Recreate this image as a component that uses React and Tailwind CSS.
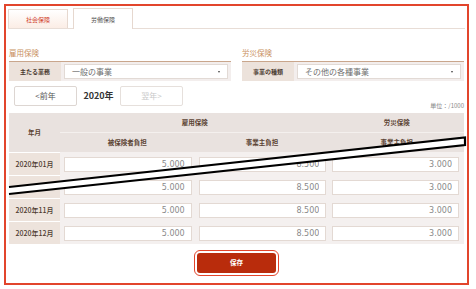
import React from 'react';

const rows = [
  { label: '2020年01月', a: '5.000', b: '8.500', c: '3.000' },
  { label: '', a: '5.000', b: '8.500', c: '3.000' },
  { label: '2020年11月', a: '5.000', b: '8.500', c: '3.000' },
  { label: '2020年12月', a: '5.000', b: '8.500', c: '3.000' },
];

function NumInput({ value }) {
  return (
    <input
      readOnly
      value={value}
      className="w-full h-[15px] bg-white border border-[#e3d9d3] text-right pr-[6px] text-[8px] text-[#8a8a8a] font-['DejaVu_Sans',sans-serif] outline-none"
    />
  );
}

function SelectRow({ label, value }) {
  return (
    <div className="flex h-[20px] border-t border-[#c9a68c] bg-[#f3eeed]">
      <div className="w-[52px] bg-[#ece2db] flex items-center justify-center text-[6px] font-bold text-[#4a3a30]">
        {label}
      </div>
      <div className="flex-1 px-[3px] flex items-center">
        <div className="w-full h-[15px] bg-white border border-[#e2dad5] flex items-center pl-[7px] pr-[7px]">
          <span className="text-[8px] text-[#6f6f6f] flex-1">{value}</span>
          <span className="w-0 h-0 border-l-[1.5px] border-r-[1.5px] border-t-[2px] border-l-transparent border-r-transparent border-t-[#444]" />
        </div>
      </div>
    </div>
  );
}

export default function App() {
  return (
    <div className="relative w-[476px] h-[289px] bg-white pt-[4px] pl-[4px] font-['Noto_Sans_CJK_JP',sans-serif] overflow-hidden">
      <div className="w-[465px] h-[281px] border-2 border-[#e2452c]">
        {/* tabs */}
        <div className="mx-[2px] mt-[1px] h-[22px] flex items-end gap-[5px] border-b border-[#e8ddd6]">
          <div className="w-[60px] h-[19px] border border-b-0 border-[#e6d8cf] bg-linear-to-b from-white to-[#fbede5] flex items-center justify-center text-[6px] text-[#d0402a]">
            社会保険
          </div>
          <div className="w-[60px] h-[21px] -mb-px border border-b-0 border-[#e6d8cf] bg-white flex items-center justify-center text-[6px] text-[#555]">
            労働保険
          </div>
        </div>

        <div className="mx-[3px]">
          {/* selects */}
          <div className="grid grid-cols-2 gap-[11px] mt-[18px]">
            <div>
              <div className="h-[12px] leading-[12px] text-[7.5px] text-[#c9915f] mb-[2px]">雇用保険</div>
              <SelectRow label="主たる業務" value="一般の事業" />
            </div>
            <div>
              <div className="h-[12px] leading-[12px] text-[7.5px] text-[#c9915f] mb-[2px]">労災保険</div>
              <SelectRow label="事業の種類" value="その他の各種事業" />
            </div>
          </div>

          {/* year nav */}
          <div className="flex items-center h-[20px] mt-[5px] pl-[5px]">
            <button className="w-[63px] h-[20px] border border-[#ddd6d2] rounded-[2px] bg-white text-[8px] text-[#555]">
              &lt;前年
            </button>
            <span className="w-[43px] text-center text-[9px] font-bold text-[#333]">2020年</span>
            <button className="w-[63px] h-[20px] border border-[#e6e0dc] rounded-[2px] bg-white text-[8px] text-[#c8c8c8]">
              翌年&gt;
            </button>
            <span className="ml-auto self-end -mb-[4px] leading-[8px] text-[6px] text-[#888]">単位：/1000</span>
          </div>

          {/* table */}
          <div className="mt-[7px] grid grid-cols-[51px_1fr_1fr_1fr] bg-[#f4f0ef]">
            <div className="row-span-2 bg-[#e9e2df] flex items-center justify-center text-[6.5px] font-bold text-[#5b4333]">
              年月
            </div>
            <div className="col-span-2 h-[20px] bg-[#e9e2df] border-b border-[#f4f0ee] flex items-center justify-center text-[6.5px] font-bold text-[#5b4333]">
              雇用保険
            </div>
            <div className="h-[20px] bg-[#e9e2df] border-b border-[#f4f0ee] flex items-center justify-center text-[6.5px] font-bold text-[#5b4333]">
              労災保険
            </div>
            <div className="h-[19px] bg-[#e9e2df] flex items-center justify-center text-[6.5px] font-bold text-[#5b4333]">
              被保険者負担
            </div>
            <div className="h-[19px] bg-[#e9e2df] flex items-center justify-center text-[6.5px] font-bold text-[#5b4333]">
              事業主負担
            </div>
            <div className="h-[19px] bg-[#e9e2df] flex items-center justify-center text-[6.5px] font-bold text-[#5b4333]">
              事業主負担
            </div>

            {rows.map((r, i) => (
              <React.Fragment key={i}>
                <div className="h-[23px] border-t border-white bg-[#ede3dc] flex items-center justify-center text-[7px] font-medium text-[#4d3b30]">
                  {r.label}
                </div>
                <div className="h-[23px] border-t border-[#f4f0ef] flex items-center pl-[4px] pr-[3px]">
                  <NumInput value={r.a} />
                </div>
                <div className="h-[23px] border-t border-[#f4f0ef] flex items-center pl-[4px] pr-[3px]">
                  <NumInput value={r.b} />
                </div>
                <div className="h-[23px] border-t border-[#f4f0ef] flex items-center pl-[3px] pr-[5px]">
                  <NumInput value={r.c} />
                </div>
              </React.Fragment>
            ))}
          </div>

          {/* save */}
          <div className="flex justify-center mt-[9px]">
            <button className="w-[79px] h-[20px] rounded-[3px] bg-[#b92c0c] text-white text-[6.5px] font-bold outline-[1.5px] outline-offset-[2.5px] outline-[#e2452c]">
              保存
            </button>
          </div>
        </div>
      </div>

      {/* page-break mark */}
      <svg className="absolute left-0 top-0 pointer-events-none" width="476" height="289" viewBox="0 0 476 289">
        <polygon points="9,187 465,137.5 465,145 9,194" fill="white" />
        <polyline points="9,187 465,137.5 465,145 9,194" fill="none" stroke="black" strokeWidth="2.2" strokeLinejoin="miter" />
      </svg>
    </div>
  );
}
